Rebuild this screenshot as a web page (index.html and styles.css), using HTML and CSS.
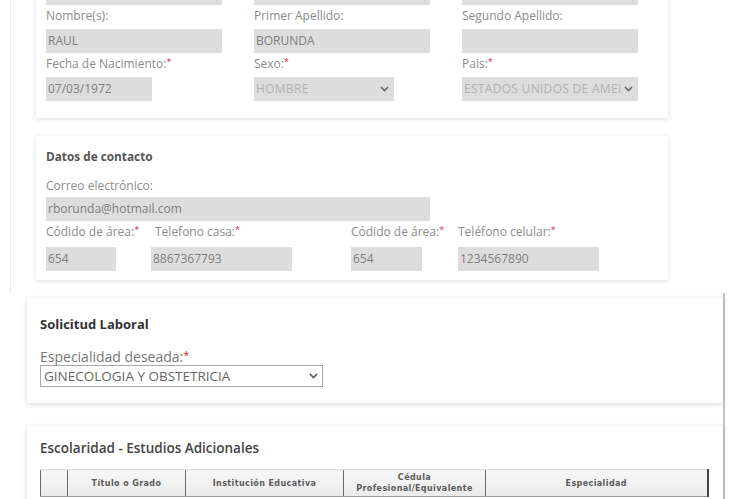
FILE: index.html
```html
<!DOCTYPE html>
<html lang="es">
<head>
<meta charset="utf-8">
<title>Solicitud</title>
<link rel="stylesheet" href="styles.css">
</head>
<body>
<div class="upper">
  <section class="card card-personal">
    <div class="grid3">
      <div class="field"><div class="input"></div></div>
      <div class="field"><div class="input"></div></div>
      <div class="field"><div class="input"></div></div>

      <div class="field"><div class="label">Nombre(s):</div><div class="input">RAUL</div></div>
      <div class="field"><div class="label">Primer Apellido:</div><div class="input">BORUNDA</div></div>
      <div class="field"><div class="label">Segundo Apellido:</div><div class="input"></div></div>

      <div class="field"><div class="label">Fecha de Nacimiento:<span class="req">*</span></div><div class="input w-date">07/03/1972</div></div>
      <div class="field"><div class="label">Sexo:<span class="req">*</span></div><div class="input select w-sexo"><span class="muted">HOMBRE</span><svg class="chev" width="9" height="6" viewBox="0 0 9 6"><polyline points="1,1 4.5,4.5 8,1" fill="none" stroke="#666" stroke-width="1.6"/></svg></div></div>
      <div class="field"><div class="label">Pais:<span class="req">*</span></div><div class="input select"><span class="muted clip">ESTADOS UNIDOS DE AMEI</span><svg class="chev" width="9" height="6" viewBox="0 0 9 6"><polyline points="1,1 4.5,4.5 8,1" fill="none" stroke="#666" stroke-width="1.6"/></svg></div></div>
    </div>
  </section>

  <section class="card card-contact">
    <h3 class="card-title">Datos de contacto</h3>
    <div class="label label-email">Correo electrónico:</div>
    <div class="input w-email">rborunda@hotmail.com</div>
    <div class="phones">
      <div class="field f-area"><div class="label">Códido de área:<span class="req">*</span></div><div class="input">654</div></div>
      <div class="field f-tel"><div class="label pad-l">Telefono casa:<span class="req">*</span></div><div class="input">8867367793</div></div>
      <div class="field f-area2"><div class="label">Códido de área:<span class="req">*</span></div><div class="input">654</div></div>
      <div class="field f-tel"><div class="label">Teléfono celular:<span class="req">*</span></div><div class="input">1234567890</div></div>
    </div>
  </section>
</div>

<div class="lower">
  <section class="panel panel-solicitud">
    <h3 class="panel-title">Solicitud Laboral</h3>
    <div class="label-lg">Especialidad deseada:<span class="req req-lg">*</span></div>
    <div class="select-box"><span>GINECOLOGIA Y OBSTETRICIA</span><svg class="chev" width="9" height="6" viewBox="0 0 9 6"><polyline points="1,1 4.5,4.5 8,1" fill="none" stroke="#555" stroke-width="1.6"/></svg></div>
  </section>

  <section class="panel panel-escolaridad">
    <h3 class="panel-title2">Escolaridad - Estudios Adicionales</h3>
    <table class="grid-table">
      <thead>
        <tr>
          <th class="c0"></th>
          <th class="c1">Título o Grado</th>
          <th class="c2">Institución Educativa</th>
          <th class="c3">Cédula<br>Profesional/Equivalente</th>
          <th class="c4">Especialidad</th>
        </tr>
      </thead>
    </table>
  </section>
</div>
</body>
</html>
```

FILE: styles.css
```css
* { box-sizing: border-box; }

html, body {
  margin: 0;
  padding: 0;
  background: #ffffff;
  overflow: hidden;
}

body {
  width: 740px;
  height: 499px;
  font-family: "Open Sans", "DejaVu Sans", sans-serif;
  color: #888;
}

.upper {
  margin: -29px 0 0 10px;
  border-left: 1px solid #efefef;
  padding: 0 0 13px 25px;
  width: 660px;
}

.card {
  width: 632px;
  background: #fff;
  box-shadow: 0 1px 5px rgba(0, 0, 0, 0.14);
  padding: 10px 10px 17px 10px;
}

.grid3 {
  display: grid;
  grid-template-columns: 176px 176px 176px;
  column-gap: 32px;
}

.label {
  font-size: 12px;
  line-height: 14px;
  height: 24px;
  padding-top: 4px;
  margin-bottom: 0;
  color: #8c8c8c;
  white-space: nowrap;
}

.req {
  color: #d0303a;
  font-size: 9px;
  line-height: 10px;
  vertical-align: top;
}

.req-lg { font-size: 11px; }

.input {
  height: 24px;
  background: #dddddd;
  font-size: 12px;
  line-height: 24px;
  color: #7d7d7d;
  padding: 0 2px;
  white-space: nowrap;
  overflow: hidden;
}

.w-date { width: 106px; }
.w-sexo { width: 140px; }

.select {
  display: flex;
  align-items: center;
  justify-content: space-between;
  padding-right: 5px;
}

.muted { color: #b0b0b0; letter-spacing: 0.3px; }
.clip { overflow: hidden; white-space: nowrap; flex: 1; }
.chev { flex: none; margin-left: 3px; }

.card-contact {
  margin-top: 18px;
  padding: 13px 10px 9px 10px;
}

.card-title {
  margin: 0;
  font-size: 11.8px;
  line-height: 14px;
  font-weight: 700;
  color: #555;
}

.label-email {
  margin-top: 16px;
  height: 18px;
  padding-top: 0;
}

.w-email { width: 384px; }

.phones {
  display: flex;
}

.phones .label { height: 26px; }

.f-area { width: 70px; margin-right: 35px; }
.f-tel { width: 141px; }
.f-area2 { width: 71px; margin-left: 59px; margin-right: 36px; }
.pad-l { padding-left: 4px; }

.lower {
  margin-left: 27px;
  width: 698px;
  border-right: 2px solid #c6c6c6;
  padding-top: 5px;
  height: 210px;
}

.panel {
  background: #fff;
  box-shadow: 0 1px 5px rgba(0, 0, 0, 0.16);
  width: 696px;
}

.panel-solicitud {
  padding: 17px 12px 16px 13px;
}

.panel-title {
  margin: 0;
  font-size: 13px;
  line-height: 18px;
  font-weight: 700;
  color: #333;
}

.label-lg {
  margin-top: 17px;
  height: 14px;
  font-size: 14px;
  line-height: 14px;
  color: #777;
}

.select-box {
  margin-top: 1px;
  width: 283px;
  height: 22px;
  border: 1px solid #a9a9a9;
  display: flex;
  align-items: center;
  justify-content: space-between;
  padding: 0 4px 0 3px;
  font-size: 13.5px;
  color: #666;
}

.panel-escolaridad {
  margin-top: 23px;
  padding: 13px 12px 10px 13px;
}

.panel-title2 {
  margin: 0;
  font-size: 13.5px;
  line-height: 18px;
  font-weight: 600;
  color: #444;
}

.grid-table {
  margin-top: 12px;
  border-collapse: collapse;
  width: 667px;
  table-layout: fixed;
}

.grid-table th {
  height: 27px;
  padding: 0 2px;
  background: linear-gradient(#f7f7f7, #ebebeb);
  border-top: 1px solid #dcdcdc;
  border-bottom: 1px solid #9a9a9a;
  border-left: 1px solid #6a6a6a;
  font-family: "DejaVu Sans", sans-serif;
  font-size: 8px;
  letter-spacing: 0.4px;
  line-height: 11px;
  font-weight: 700;
  color: #5a5a5a;
  text-align: center;
  vertical-align: middle;
}

.grid-table th.c4 { border-right: 2px solid #444; }

.c0 { width: 27px; }
.c1 { width: 118px; }
.c2 { width: 158px; }
.c3 { width: 142px; }
.c4 { width: 222px; }
```
